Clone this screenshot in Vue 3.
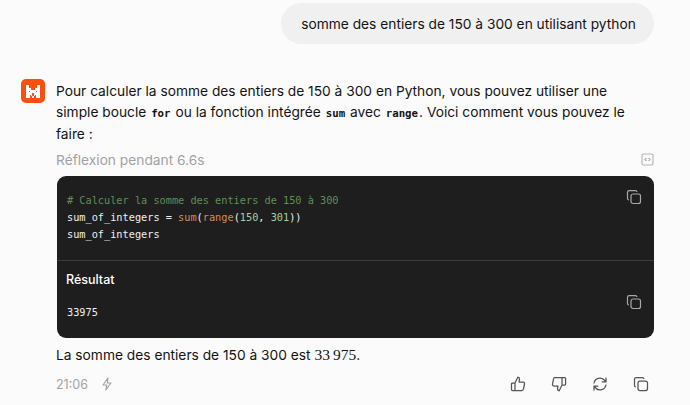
<script setup>
const pixels = [
  [0,0,3,3],[11,0,3,3],[0,3,5,2],[9,3,5,2],[0,5,14,3],[0,8,6,2],[8,8,6,2],[0,10,4,3],[5,10,1,1],[8,10,1,1],[10,10,4,3],[6,11,2,2]
]
</script>

<template>
  <main class="page">
    <div class="user-row">
      <div class="bubble">somme des entiers de 150 à 300 en utilisant python</div>
    </div>

    <section class="reply">
      <div class="avatar">
        <svg width="14" height="13" viewBox="0 0 14 13" shape-rendering="crispEdges">
          <rect v-for="(p, i) in pixels" :key="i" :x="p[0]" :y="p[1]" :width="p[2]" :height="p[3]" fill="#fff" />
          <rect x="3" y="6" width="1" height="1" fill="#fa500f" />
          <rect x="10" y="6" width="1" height="1" fill="#fa500f" />
        </svg>
      </div>

      <div class="body">
        <p class="intro">
          Pour calculer la somme des entiers de 150 à 300 en Python, vous pouvez utiliser une simple boucle <code>for</code> ou la fonction intégrée <code>sum</code> avec <code>range</code>. Voici comment vous pouvez le faire :
        </p>

        <div class="thinking">
          <span>Réflexion pendant 6.6s</span>
          <svg class="code-toggle" width="13" height="13" viewBox="0 0 13 13" fill="none">
            <rect x="1" y="1" width="11" height="11" rx="1.500" stroke="#b5b5b5" stroke-width="1.100" />
            <path d="M5.400 5 4 6.500 5.400 8M7.600 5 9 6.500 7.600 8" stroke="#777" stroke-width=".9" />
          </svg>
        </div>

        <div class="code-card">
          <div class="code-pane">
            <pre><span class="comment"># Calculer la somme des entiers de 150 à 300</span>
sum_of_integers = <span class="fn">sum</span>(<span class="fn">range</span>(<span class="num">150</span>, <span class="num">301</span>))
sum_of_integers</pre>
            <svg class="copy" width="16" height="16" viewBox="0 0 16 16" fill="none" stroke="#a8a8a8" stroke-width="1.200">
              <rect x="5" y="5" width="9.500" height="9.500" rx="2" />
              <path d="M11 3a1.600 1.600 0 0 0-1.600-1.400H3.200A1.700 1.700 0 0 0 1.500 3.300v6.100A1.600 1.600 0 0 0 3 11" />
            </svg>
          </div>
          <div class="result-pane">
            <div class="result-title">Résultat</div>
            <div class="result-main">
              <pre>33975</pre>
              <svg class="copy" width="16" height="16" viewBox="0 0 16 16" fill="none" stroke="#a8a8a8" stroke-width="1.200">
                <rect x="5" y="5" width="9.500" height="9.500" rx="2" />
                <path d="M11 3a1.600 1.600 0 0 0-1.600-1.400H3.200A1.700 1.700 0 0 0 1.500 3.300v6.100A1.600 1.600 0 0 0 3 11" />
              </svg>
            </div>
          </div>
        </div>

        <p class="conclusion">La somme des entiers de 150 à 300 est <span class="math">33&#8201;975</span>.</p>

        <div class="footer">
          <div class="meta">
            <span>21:06</span>
            <svg width="12" height="14" viewBox="0 0 12 14" fill="none" stroke="#a3a3a3" stroke-width="1.200" stroke-linejoin="round">
              <path d="M7 1 2 8h3.800L4.800 13 10 6H6.300Z" />
            </svg>
          </div>
          <div class="actions">
            <svg width="16" height="16" viewBox="0 0 16 16" fill="none" stroke="#555" stroke-width="1.250" stroke-linejoin="round">
              <path d="M5 7v7.500H2.400A1 1 0 0 1 1.500 13.500V8a1 1 0 0 1 1-1H5l2.800-5.800a2 2 0 0 1 1.700 2.100L9 6h4a1.600 1.600 0 0 1 1.500 2l-1.100 5.200a1.700 1.700 0 0 1-1.700 1.300H5" />
            </svg>
            <svg width="16" height="16" viewBox="0 0 16 16" fill="none" stroke="#555" stroke-width="1.250" stroke-linejoin="round">
              <path d="M11 9V1.500h2.600a1 1 0 0 1 1 1V8a1 1 0 0 1-1 1H11l-2.800 5.800a2 2 0 0 1-1.700-2.100L7 10H3A1.600 1.600 0 0 1 1.500 8l1.100-5.200a1.700 1.700 0 0 1 1.700-1.300H11" />
            </svg>
            <svg width="16" height="16" viewBox="0 0 16 16" fill="none" stroke="#555" stroke-width="1.250" stroke-linecap="round" stroke-linejoin="round">
              <path d="M2 7a6 6 0 0 1 10.300-3L14 5.800M14 2v3.800h-3.800M14 9a6 6 0 0 1-10.300 3L2 10.200M2 14v-3.800h3.800" />
            </svg>
            <svg width="16" height="16" viewBox="0 0 16 16" fill="none" stroke="#555" stroke-width="1.250">
              <rect x="5" y="5" width="9.500" height="9.500" rx="2" />
              <path d="M11 3a1.600 1.600 0 0 0-1.600-1.400H3.200A1.700 1.700 0 0 0 1.500 3.300v6.100A1.600 1.600 0 0 0 3 11" />
            </svg>
          </div>
        </div>
      </div>
    </section>
  </main>
</template>

<style scoped>
.page {
  width: 690px;
  height: 405px;
  overflow: hidden;
  box-sizing: border-box;
  padding: 3px 36px 0 21px;
  background: #fbfbfb;
  color: #131313;
  font-family: Inter, "Liberation Sans", sans-serif;
  font-size: 13.750px;
}
.user-row {
  display: flex;
  justify-content: flex-end;
}
.bubble {
  box-sizing: border-box;
  width: 373px;
  height: 41px;
  padding-left: 2px;
  border-radius: 21px;
  background: #f0f0f0;
  display: flex;
  align-items: center;
  justify-content: center;
  line-height: 20px;
}
.reply {
  display: flex;
  gap: 11px;
  margin-top: 35px;
}
.avatar {
  flex: none;
  width: 24px;
  height: 24px;
  border-radius: 5px;
  background: #fa500f;
  display: flex;
  align-items: center;
  justify-content: center;
}
.body {
  flex: 1;
  min-width: 0;
}
.intro {
  margin: 0;
  line-height: 21px;
  padding: 2px 12px 0 0;
}
code {
  font-family: "DejaVu Sans Mono", monospace;
  font-size: 10.750px;
  font-weight: 700;
  padding: 0 1px;
}
.thinking {
  display: flex;
  align-items: center;
  justify-content: space-between;
  margin-top: 4px;
  height: 21px;
  color: #a3a3a3;
}
.code-card {
  margin-top: 6px;
  margin-left: 1px;
  height: 162px;
  box-sizing: border-box;
  border-radius: 9px;
  background: #1e1e1e;
  color: #f0f0f0;
  overflow: hidden;
}
pre {
  margin: 0;
  font-family: "DejaVu Sans Mono", monospace;
  font-size: 10.250px;
  line-height: 17px;
}
.code-pane {
  position: relative;
  height: 85px;
  box-sizing: border-box;
  padding: 16px 10px 0;
  border-bottom: 1px solid #3c3c3c;
}
.comment { color: #5f8f56; }
.fn { color: #d58a5d; }
.num { color: #a8cfa0; }
.copy {
  position: absolute;
  top: 13px;
  right: 12px;
}
.result-pane {
  padding: 11px 9px 0;
}
.result-title {
  color: #fff;
  font-size: 12.500px;
  font-weight: 500;
  line-height: 16px;
}
.result-main {
  margin-top: 8px;
  position: relative;
}
.result-main pre {
  padding-top: 8px;
  padding-left: 1px;
}
.result-main .copy {
  top: -2px;
  right: 3px;
}
.conclusion {
  margin: 6px 0 0;
  line-height: 21px;
}
.math {
  font-family: "Liberation Serif", serif;
  font-size: 15.500px;
}
.footer {
  display: flex;
  align-items: center;
  justify-content: space-between;
  margin-top: 10px;
}
.meta {
  display: flex;
  align-items: center;
  gap: 13px;
  color: #a3a3a3;
  font-size: 12.500px;
}
.actions {
  display: flex;
  gap: 25px;
  margin-right: 5px;
}
</style>

<style>
html, body { margin: 0; background: #fbfbfb; }
</style>
